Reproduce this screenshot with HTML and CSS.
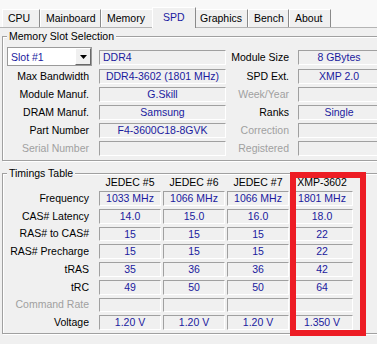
FILE: index.html
```html
<!DOCTYPE html>
<html lang="en">
<head>
    <meta charset="UTF-8">
    <meta name="viewport" content="width=device-width, initial-scale=1.0">
    <title>CPU-Z SPD</title>
    <link rel="stylesheet" href="styles.css">
</head>
<body>

    <div class="tabs">
        <div class="tab tab-cpu">CPU</div>
        <div class="tab tab-mainboard">Mainboard</div>
        <div class="tab tab-memory">Memory</div>
        <div class="tab tab-spd active">SPD</div>
        <div class="tab tab-graphics">Graphics</div>
        <div class="tab tab-bench">Bench</div>
        <div class="tab tab-about">About</div>
    </div>

    <div class="panel">
        <!-- Memory Slot Selection -->
        <div class="group slot-group">
            <div class="group-title">Memory Slot Selection</div>
            <div class="slot-grid">
                <div class="combo">
                    <span class="combo-text">Slot #1</span>
                    <span class="combo-btn">
                        <svg width="7" height="4" viewBox="0 0 7 4"><polygon points="0,0 7,0 3.5,4" fill="#000"/></svg>
                    </span>
                </div>
                <div class="field first left">DDR4</div>
                <div class="label label-right first">Module Size</div>
                <div class="field first">8 GBytes</div>

                <div class="label">Max Bandwidth</div>
                <div class="field">DDR4-3602 (1801 MHz)</div>
                <div class="label label-right">SPD Ext.</div>
                <div class="field">XMP 2.0</div>

                <div class="label">Module Manuf.</div>
                <div class="field">G.Skill</div>
                <div class="label label-right dim">Week/Year</div>
                <div class="field"></div>

                <div class="label">DRAM Manuf.</div>
                <div class="field">Samsung</div>
                <div class="label label-right">Ranks</div>
                <div class="field">Single</div>

                <div class="label">Part Number</div>
                <div class="field">F4-3600C18-8GVK</div>
                <div class="label label-right dim">Correction</div>
                <div class="field"></div>

                <div class="label dim">Serial Number</div>
                <div class="field"></div>
                <div class="label label-right dim">Registered</div>
                <div class="field"></div>
            </div>
        </div>

        <!-- Timings Table -->
        <div class="group timings-group">
            <div class="group-title">Timings Table</div>
            <div class="timing-grid">
                <div></div>
                <div class="col-head">JEDEC #5</div>
                <div class="col-head">JEDEC #6</div>
                <div class="col-head">JEDEC #7</div>
                <div class="col-head">XMP-3602</div>

                <div class="label">Frequency</div>
                <div class="field">1033 MHz</div>
                <div class="field">1066 MHz</div>
                <div class="field">1066 MHz</div>
                <div class="field">1801 MHz</div>

                <div class="label">CAS# Latency</div>
                <div class="field">14.0</div>
                <div class="field">15.0</div>
                <div class="field">16.0</div>
                <div class="field">18.0</div>

                <div class="label">RAS# to CAS#</div>
                <div class="field">15</div>
                <div class="field">15</div>
                <div class="field">15</div>
                <div class="field">22</div>

                <div class="label">RAS# Precharge</div>
                <div class="field">15</div>
                <div class="field">15</div>
                <div class="field">15</div>
                <div class="field">22</div>

                <div class="label">tRAS</div>
                <div class="field">35</div>
                <div class="field">36</div>
                <div class="field">36</div>
                <div class="field">42</div>

                <div class="label">tRC</div>
                <div class="field">49</div>
                <div class="field">50</div>
                <div class="field">50</div>
                <div class="field">64</div>

                <div class="label dim">Command Rate</div>
                <div class="field"></div>
                <div class="field"></div>
                <div class="field"></div>
                <div class="field"></div>

                <div class="label">Voltage</div>
                <div class="field">1.20 V</div>
                <div class="field">1.20 V</div>
                <div class="field">1.20 V</div>
                <div class="field">1.350 V</div>
            </div>
        </div>
    </div>

    <!-- red marker drawn over the XMP column -->
    <div class="highlight"></div>

</body>
</html>
```

FILE: styles.css
```css
html, body {
    margin: 0;
    overflow: hidden;
}

body {
    position: relative;
    width: 377px;
    height: 344px;
    background-color: #f0f0f0;
    font-family: "Liberation Sans", Arial, sans-serif;
    font-size: 10.5px;
    color: #000;
}

/* tab strip */
.tabs {
    display: flex;
    height: 18px;
    padding: 9px 0 0 2px;
    background-color: #f8f8f8;
}

.tab {
    box-sizing: border-box;
    height: 18px;
    padding-left: 5px;
    line-height: 16px;
    border-top: 1px solid #fff;
    border-left: 1px solid #fff;
    border-right: 1px solid #8a8a8a;
    background-color: #f0f0f0;
    white-space: nowrap;
}

.tab-cpu { width: 38px; }
.tab-mainboard { width: 61px; }
.tab-memory { width: 53px; }
.tab-spd { width: 40px; }
.tab-graphics { width: 54px; }
.tab-bench { width: 41px; }
.tab-about { width: 42px; }

.tab.active {
    position: relative;
    z-index: 1;
    width: 44px;
    height: 21px;
    margin: -2px -2px 0;
    padding: 1px 0 0 10px;
    color: #1a1aa0;
}

.panel {
    border-top: 1px solid #b4b4b4;
}

/* group boxes */
.group {
    box-sizing: border-box;
    width: 392px;
    margin: 8px 0 0 2px;
    border: 1px solid #a0a0a0;
    box-shadow: inset 1px 1px 0 #fff, 1px 1px 0 #fff;
}

.timings-group {
    margin-top: 12px;
}

.group-title {
    width: fit-content;
    margin: -7px 0 0 4px;
    padding: 0 2px;
    line-height: 13px;
    background-color: #f0f0f0;
}

.slot-grid {
    display: grid;
    grid-template-columns: 96px 127px 72px 82px;
    grid-template-rows: 19px repeat(5, 15px);
    row-gap: 3px;
    align-items: center;
    margin-top: 4px;
    padding-bottom: 4px;
}

.label {
    padding-right: 10px;
    line-height: 15px;
    text-align: right;
    white-space: nowrap;
}

.label-right {
    padding-right: 9px;
}

.dim {
    color: #a0a0a0;
}

.field {
    box-sizing: border-box;
    height: 15px;
    line-height: 13px;
    border: 1px solid;
    border-color: #a0a0a0 #fff #fff #a0a0a0;
    color: #1a1a9e;
    text-align: center;
    white-space: nowrap;
    overflow: hidden;
}

.field.left {
    padding-left: 3px;
    text-align: left;
}

.first {
    align-self: end;
    margin-bottom: 1px;
}

/* slot combo box */
.combo {
    box-sizing: border-box;
    display: flex;
    align-items: center;
    width: 85px;
    height: 19px;
    margin-left: 4px;
    border: 1px solid #9a9a9a;
    background-color: #fff;
}

.combo-text {
    flex: 1;
    padding-left: 3px;
    color: #1a1a9e;
}

.combo-btn {
    box-sizing: border-box;
    display: flex;
    align-items: center;
    justify-content: center;
    width: 16px;
    height: 17px;
    padding-top: 1px;
    border: 1px solid;
    border-color: #fff #696969 #696969 #fff;
    background-color: #f0f0f0;
}

.combo-btn svg {
    display: block;
}

/* timings */
.timing-grid {
    display: grid;
    grid-template-columns: 94px repeat(4, 62px);
    grid-template-rows: 12px repeat(8, 14.75px);
    column-gap: 2px;
    row-gap: 3px;
    align-items: center;
    margin-top: -4px;
    padding-bottom: 3px;
}

.timing-grid .label {
    padding-right: 8px;
}

.timing-grid .field {
    height: 100%;
    line-height: 12.75px;
}

.col-head {
    line-height: 12px;
    text-align: center;
    white-space: nowrap;
}

.highlight {
    position: absolute;
    left: 290px;
    top: 172px;
    box-sizing: border-box;
    width: 76px;
    height: 164px;
    border: 6px solid #ed1c24;
}
```
